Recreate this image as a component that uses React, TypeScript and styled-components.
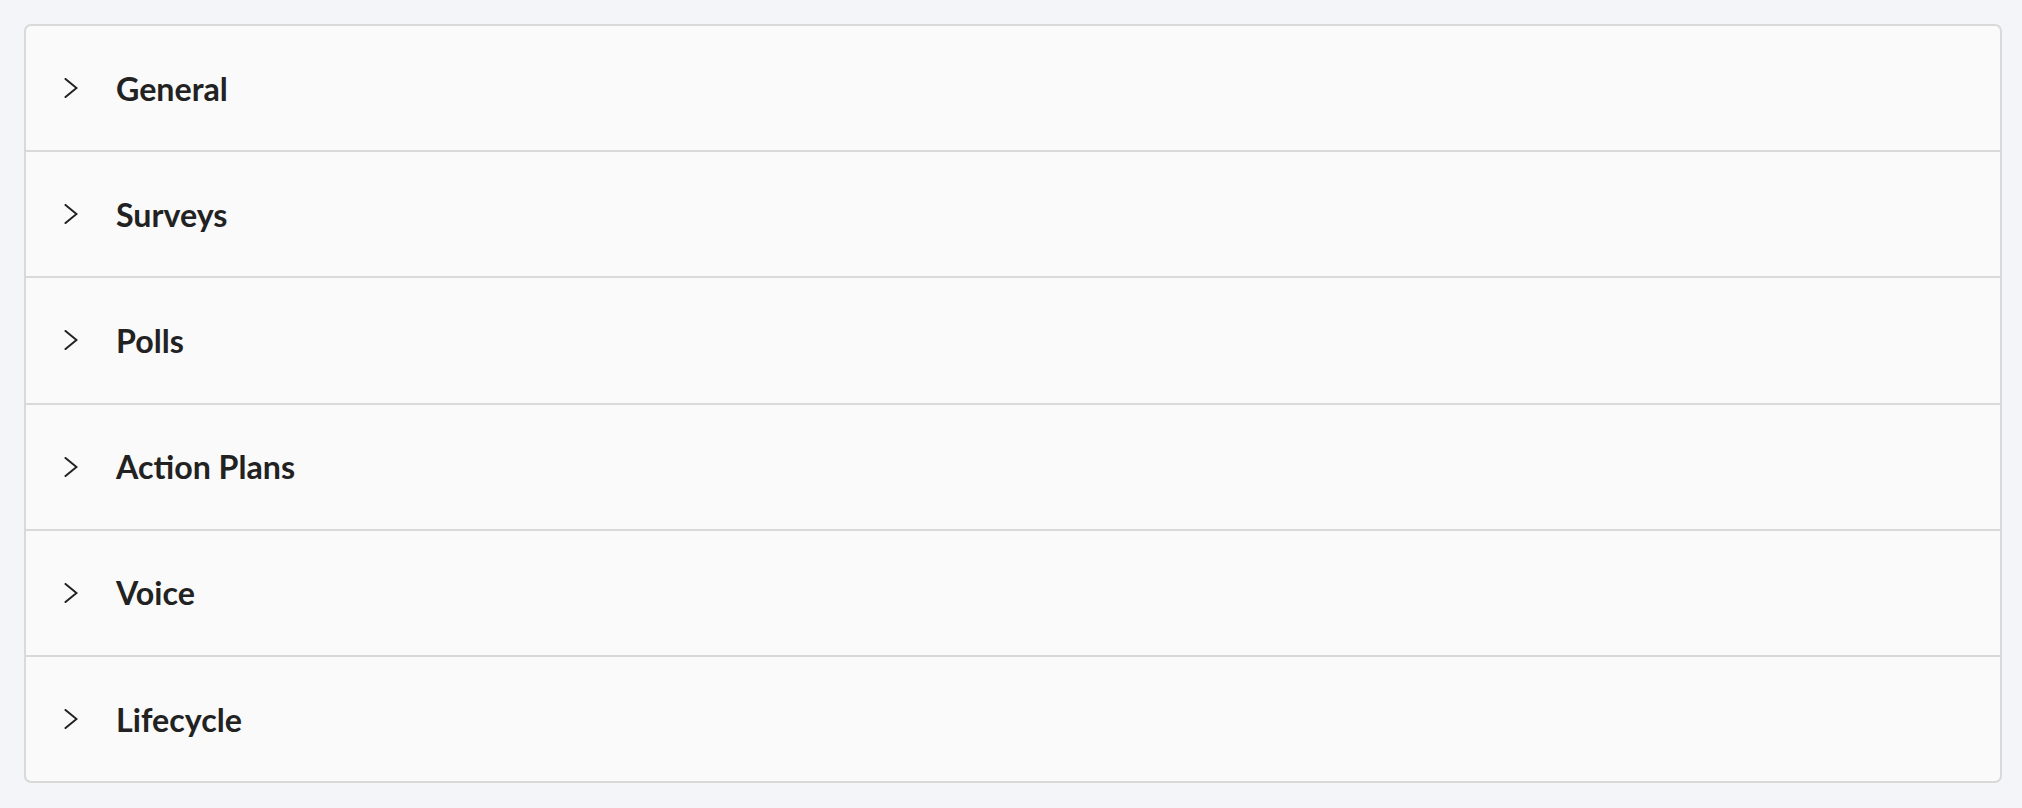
import React from "react";
import styled, { createGlobalStyle } from "styled-components";

const Global = createGlobalStyle`
  html, body { margin: 0; padding: 0; background: #f4f5f9; }
  body { font-family: Lato, "Noto Sans", sans-serif; }
`;

const Page = styled.div`
  padding: 24px 20px 24px 24px;
`;

const Card = styled.div`
  background: #fafafa;
  border: 2px solid #d9d9d9;
  border-radius: 7px;
  overflow: hidden;
`;

const Row = styled.div<{ $last?: boolean }>`
  height: 124.2px;
  display: flex;
  align-items: center;
  padding-left: 38px;
  gap: 38px;
  border-bottom: ${(p) => (p.$last ? "none" : "2px solid #d9d9d9")};
  cursor: pointer;
`;

const Chevron = styled.svg`
  width: 14px;
  height: 20px;
  flex: none;
  color: #222;
`;

const Title = styled.span`
  font-family: Lato, "Noto Sans", sans-serif;
  font-weight: 700;
  font-size: 32.2px;
  color: #222;
  letter-spacing: 0;
`;

const items = ["General", "Surveys", "Polls", "Action Plans", "Voice", "Lifecycle"];

export default function App() {
  return (
    <>
      <Global />
      <Page>
        <Card>
          {items.map((t, i) => (
            <Row key={t} $last={i === items.length - 1}>
              <Chevron viewBox="0 0 14 20" fill="none">
                <path d="M1.5 1 L12.5 10 L1.5 19" stroke="currentColor" strokeWidth="2" strokeLinecap="round" strokeLinejoin="miter" />
              </Chevron>
              <Title>{t}</Title>
            </Row>
          ))}
        </Card>
      </Page>
    </>
  );
}
